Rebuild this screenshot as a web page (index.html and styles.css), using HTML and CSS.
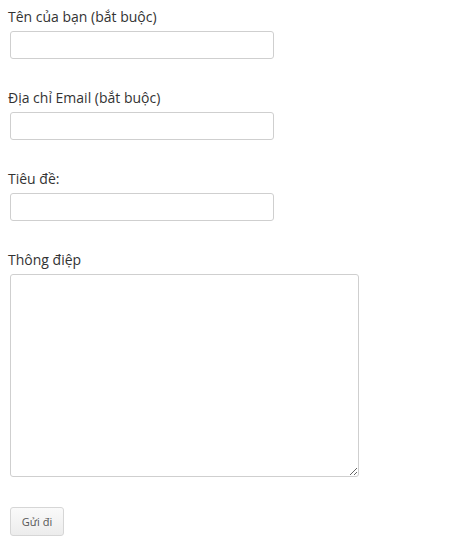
FILE: index.html
```html
<!DOCTYPE html>
<html lang="vi">
<head>
<meta charset="utf-8">
<link rel="stylesheet" href="styles.css">
</head>
<body>
<form class="form">
  <div class="field">
    <label class="label">Tên của bạn (bắt buộc)</label>
    <input class="input" type="text">
  </div>
  <div class="field">
    <label class="label">Địa chỉ Email (bắt buộc)</label>
    <input class="input" type="text">
  </div>
  <div class="field">
    <label class="label">Tiêu đề:</label>
    <input class="input" type="text">
  </div>
  <div class="field">
    <label class="label">Thông điệp</label>
    <textarea class="textarea"></textarea>
  </div>
  <div class="actions">
    <button class="button" type="button">Gửi đi</button>
  </div>
</form>
</body>
</html>
```

FILE: styles.css
```css
html, body {
  margin: 0;
  padding: 0;
  background: #fff;
}
body {
  font-family: "Open Sans", "Liberation Sans", sans-serif;
  font-size: 14px;
  color: #333;
}
.form {
  display: flex;
  flex-direction: column;
  gap: 28px;
  padding: 6px 8px 0 8px;
}
.field {
  display: flex;
  flex-direction: column;
  align-items: flex-start;
}
.label {
  display: block;
  line-height: 22px;
}
.input,
.textarea {
  box-sizing: border-box;
  margin: 3px 0 0 2px;
  border: 1px solid #cfcfcf;
  border-radius: 3px;
  background: #fff;
  font-family: inherit;
  font-size: 13px;
  padding: 4px 6px;
  outline: none;
}
.input {
  width: 264px;
  height: 28px;
}
.textarea {
  width: 349px;
  height: 203px;
  resize: both;
}
.actions {
  padding-left: 2px;
  margin-top: 2px;
}
.button {
  box-sizing: border-box;
  height: 29px;
  width: 54px;
  padding: 0;
  border: 1px solid #d6d6d6;
  border-radius: 3px;
  background: linear-gradient(#fafafa, #ececec);
  color: #555;
  font-family: inherit;
  font-size: 11px;
}
```
